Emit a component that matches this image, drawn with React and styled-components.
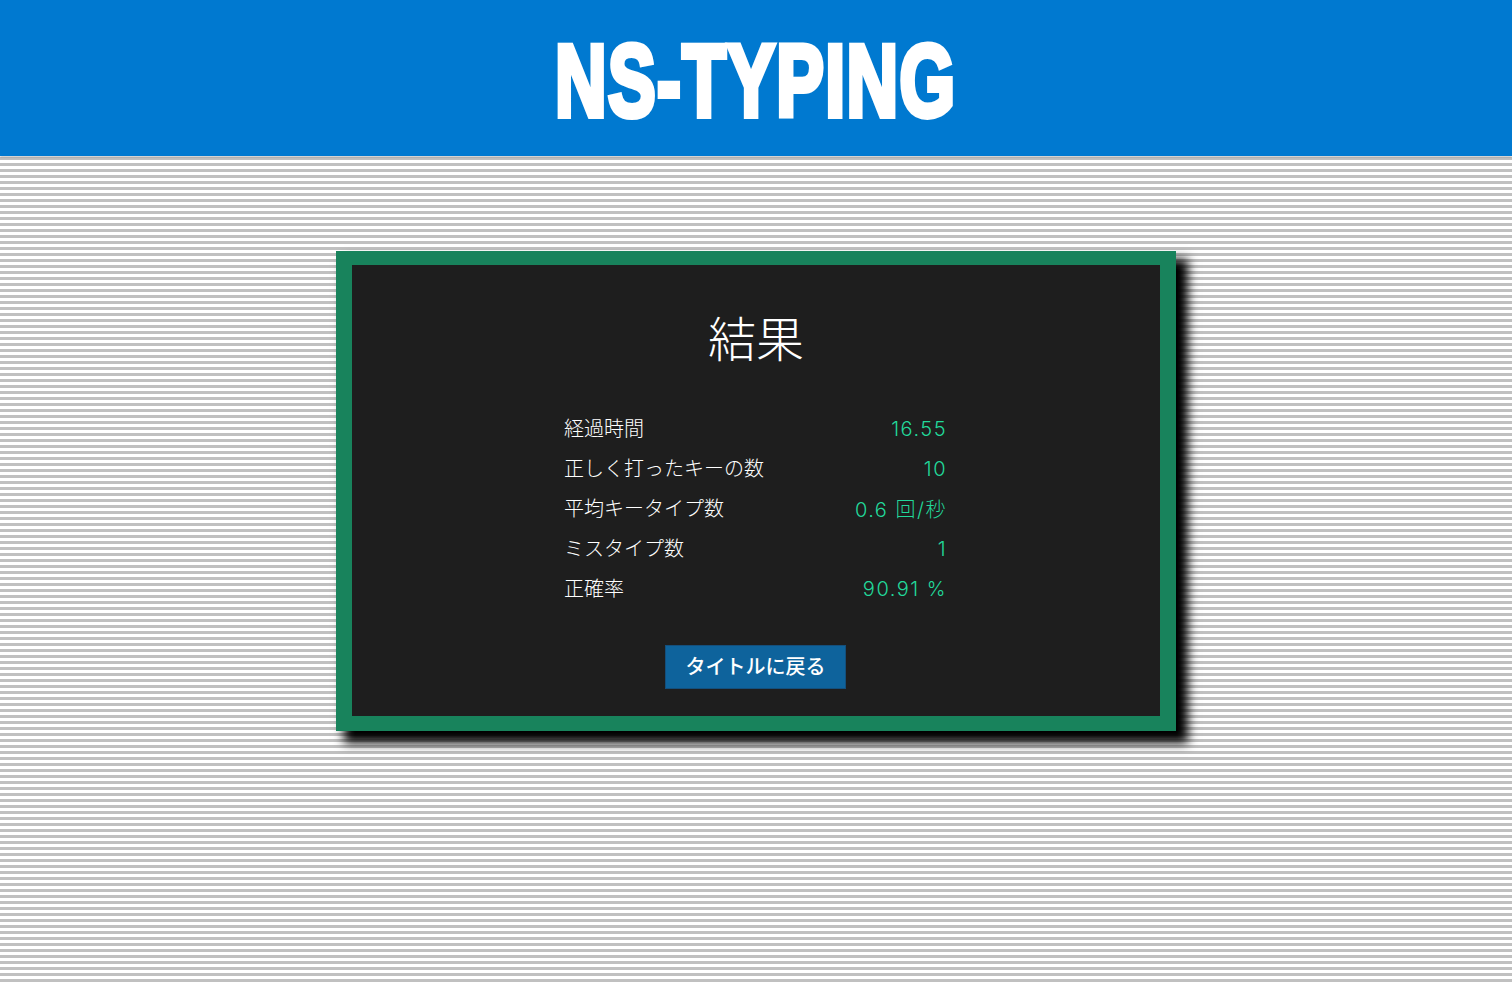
import styled, { createGlobalStyle } from "styled-components";

const rows = [
  { label: "経過時間", value: "16.55" },
  { label: "正しく打ったキーの数", value: "10" },
  { label: "平均キータイプ数", value: "0.6 回/秒" },
  { label: "ミスタイプ数", value: "1" },
  { label: "正確率", value: "90.91 %" },
];

export default function App() {
  return (
    <>
      <GlobalStyle />
      <Header>
        <Logo>NS-TYPING</Logo>
      </Header>
      <Main>
        <ResultCard>
          <Title>結果</Title>
          <ResultList>
            {rows.map((row) => (
              <ResultRow key={row.label}>
                <Label>{row.label}</Label>
                <Value>{row.value}</Value>
              </ResultRow>
            ))}
          </ResultList>
          <BackButton>タイトルに戻る</BackButton>
        </ResultCard>
      </Main>
    </>
  );
}

const GlobalStyle = createGlobalStyle`
  html, body {
    margin: 0;
    padding: 0;
    height: 982px;
    overflow: hidden;
  }

  body {
    font-family: "Noto Sans CJK JP", "Noto Sans", sans-serif;
    background: repeating-linear-gradient(
      to bottom,
      #ffffff 0px,
      #ffffff 1px,
      #c0c0c0 1px,
      #c0c0c0 4px,
      #ffffff 4px,
      #ffffff 6px
    );
  }
`;

const Header = styled.header`
  height: 156px;
  background: #0079d0;
  display: flex;
  justify-content: center;
  align-items: center;
  box-shadow: 0 1px 2px rgba(0, 0, 0, 0.25);
`;

const Logo = styled.h1`
  margin: 0;
  padding-top: 6px;
  font-family: "Liberation Sans", Arial, sans-serif;
  font-weight: 700;
  font-size: 102px;
  line-height: 156px;
  color: #ffffff;
  white-space: nowrap;
  letter-spacing: 2px;
  -webkit-text-stroke: 6px #ffffff;
  transform: scaleX(0.7);
`;

const Main = styled.main`
  display: flex;
  justify-content: center;
  padding-top: 95px;
`;

const ResultCard = styled.section`
  box-sizing: border-box;
  width: 840px;
  height: 480px;
  background: #1e1e1e;
  border: solid #18835c;
  border-width: 14px 16px 15px;
  box-shadow: 10px 10px 10px 2px #000000;
  display: flex;
  flex-direction: column;
  align-items: center;
`;

const Title = styled.h2`
  margin: 39px 0 0;
  font-size: 48px;
  line-height: 64px;
  font-weight: 300;
  color: #ffffff;
`;

const ResultList = styled.div`
  width: 382px;
  margin-top: 39px;
  margin-left: -2px;
  display: flex;
  flex-direction: column;
`;

const ResultRow = styled.div`
  height: 40px;
  display: flex;
  justify-content: space-between;
  align-items: center;
  font-size: 20px;
  font-weight: 300;
`;

const Label = styled.span`
  color: #ffffff;
`;

const Value = styled.span`
  color: #22d89a;
  font-family: Inter, "Noto Sans CJK JP", sans-serif;
  letter-spacing: 1.5px;
  margin-right: -1px;
  padding-top: 3px;
`;

const BackButton = styled.button`
  box-sizing: border-box;
  width: 181px;
  height: 44px;
  margin-top: 38px;
  margin-left: -1px;
  padding: 0 0 4px;
  background: #0e639c;
  border: 1px solid #144f7c;
  color: #ffffff;
  font-family: inherit;
  font-size: 20px;
  font-weight: 500;
`;
